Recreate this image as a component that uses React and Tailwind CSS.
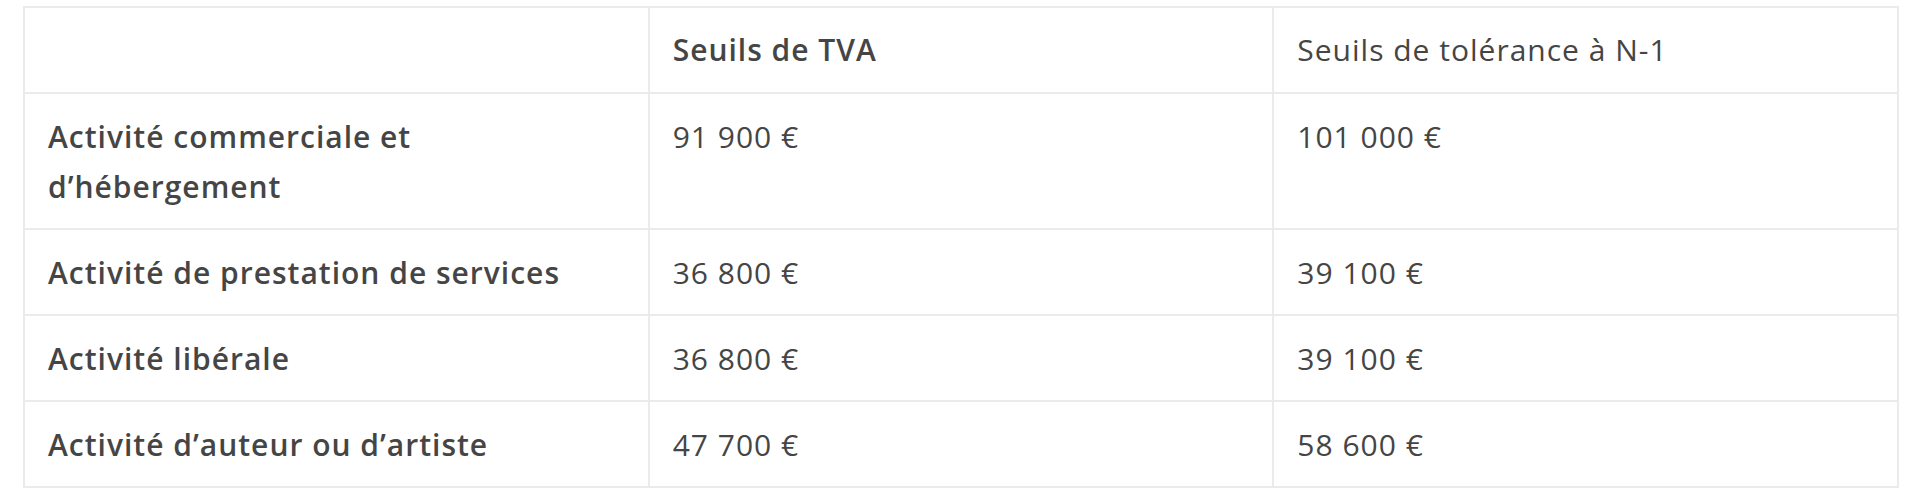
const rows = [
  { label: ['Activité commerciale et', 'd’hébergement'], tva: '91 900 €', tol: '101 000 €' },
  { label: ['Activité de prestation de services'], tva: '36 800 €', tol: '39 100 €' },
  { label: ['Activité libérale'], tva: '36 800 €', tol: '39 100 €' },
  { label: ['Activité d’auteur ou d’artiste'], tva: '47 700 €', tol: '58 600 €' },
]

export default function App() {
  return (
    <div className="min-h-screen bg-white pt-[6px] pl-[23px] text-[#454545] font-['Open_Sans',sans-serif]">
      <table className="w-[1876px] table-fixed border-collapse text-[30px] leading-[50px] tracking-[1px]">
        <thead>
          <tr className="h-[86px]">
            <th className="w-1/3 border-2 border-[#ebebeb] px-[23px] text-left font-semibold"></th>
            <th className="w-1/3 border-2 border-[#ebebeb] px-[23px] text-left font-semibold">Seuils de TVA</th>
            <th className="w-1/3 border-2 border-[#ebebeb] px-[23px] text-left font-normal">Seuils de tolérance à N-1</th>
          </tr>
        </thead>
        <tbody>
          {rows.map((r, i) => (
            <tr key={i} className="align-top">
              <td className="border-2 border-[#ebebeb] px-[23px] pt-[18px] pb-[16px] font-semibold">
                {r.label.map((l, j) => (
                  <div key={j}>{l}</div>
                ))}
              </td>
              <td className="border-2 border-[#ebebeb] px-[23px] pt-[18px] pb-[16px]">{r.tva}</td>
              <td className="border-2 border-[#ebebeb] px-[23px] pt-[18px] pb-[16px]">{r.tol}</td>
            </tr>
          ))}
        </tbody>
      </table>
    </div>
  )
}
